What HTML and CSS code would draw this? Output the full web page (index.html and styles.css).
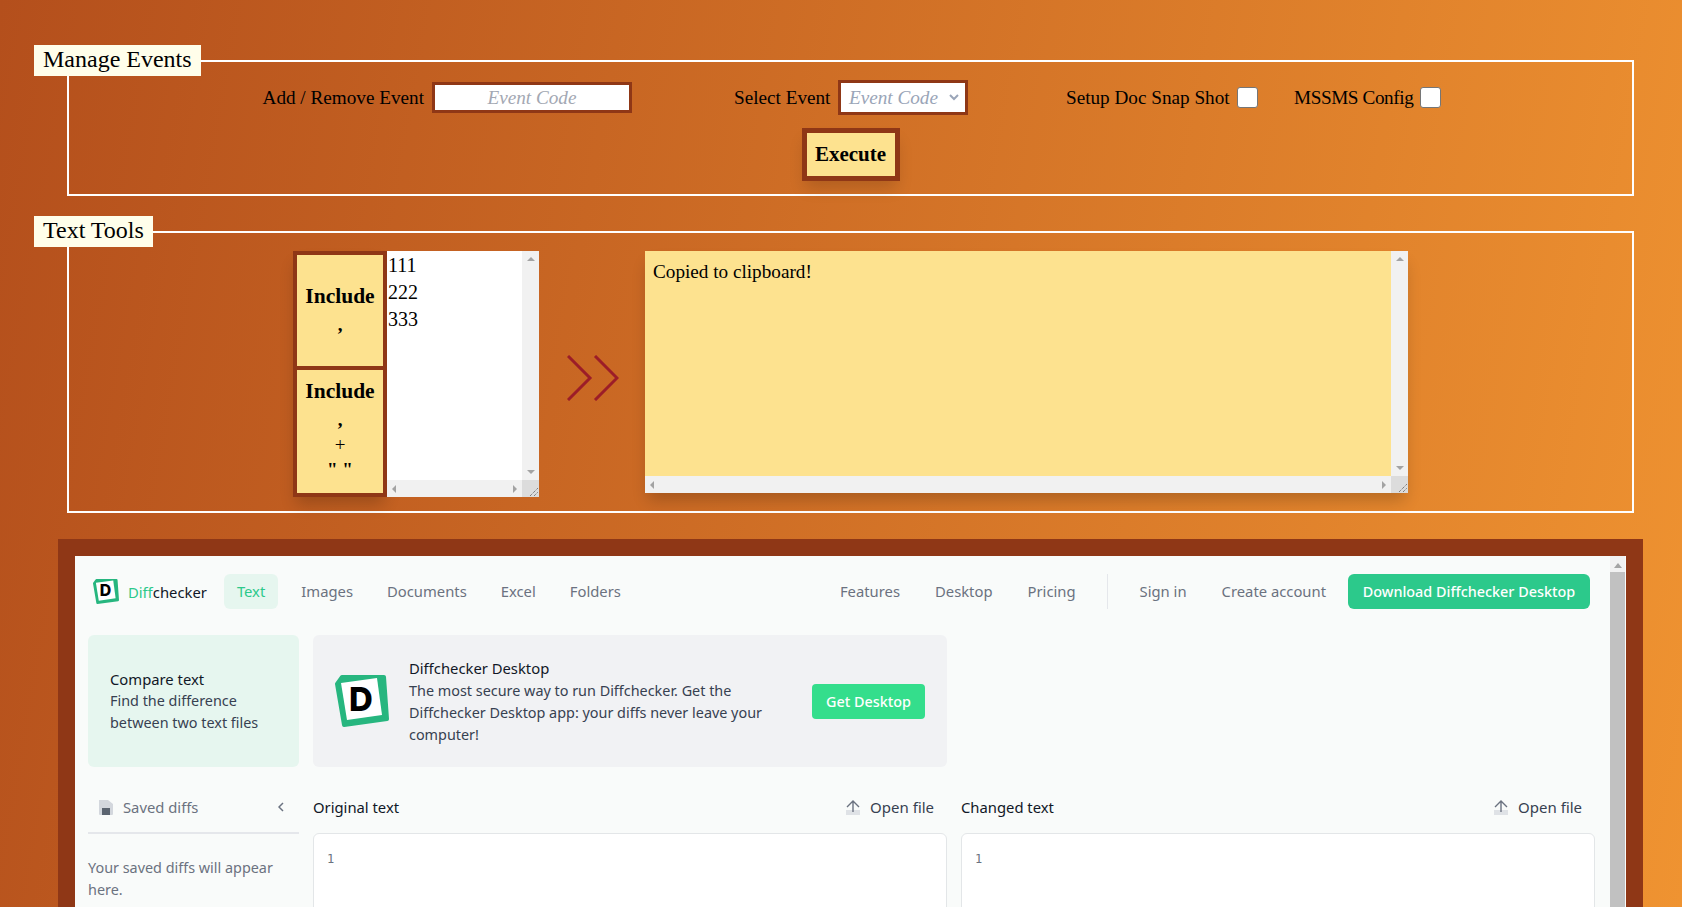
FILE: index.html
```html
<!DOCTYPE html>
<html lang="en">
<head>
  <meta charset="UTF-8"/>
  <title>Manage Events</title>
  <link rel="stylesheet" href="styles.css">
</head>
<body>

  <fieldset class="panel manage-panel">
    <legend>Manage Events</legend>
    <div class="event-row">
      <label class="lbl lbl-add">Add / Remove Event</label>
      <input type="text" class="event-input" placeholder="Event Code"/>
      <label class="lbl lbl-select">Select Event</label>
      <div class="event-select">
        <span>Event Code</span>
        <svg width="10" height="7" viewBox="0 0 10 7"><path d="M1 1l4 4 4-4" fill="none" stroke="#9aa5b8" stroke-width="2"/></svg>
      </div>
      <label class="lbl lbl-snap">Setup Doc Snap Shot</label>
      <input type="checkbox" class="check"/>
      <label class="lbl lbl-mssms">MSSMS Config</label>
      <input type="checkbox" class="check"/>
    </div>
    <div class="execute-row">
      <button class="execute">Execute</button>
    </div>
  </fieldset>

  <fieldset class="panel tools-panel">
    <legend>Text Tools</legend>
    <div class="tools-row">
      <div class="btn-stack">
        <button class="inc inc-a"><b>Include</b><span class="mark">,</span></button>
        <button class="inc inc-b"><b>Include</b><span class="mark">,</span><span>+</span><span class="mark">" "</span></button>
      </div>

      <div class="scrollbox small-box">
        <div class="box-text small-text">111<br>222<br>333</div>
        <div class="vbar"><i class="up"></i><i class="down"></i></div>
        <div class="hbar"><i class="left"></i><i class="right"></i></div>
        <div class="corner">
          <svg width="17" height="17" viewBox="0 0 17 17"><path d="M8 16l8-8M12 16l4-4" stroke="#555" stroke-width="1" stroke-dasharray="1 1" fill="none"/></svg>
        </div>
      </div>

      <svg class="arrows" width="52" height="46" viewBox="0 0 52 46">
        <path d="M1 1l22 22L1 45M28 1l22 22-22 22" fill="none" stroke="#9c1d28" stroke-width="3"/>
      </svg>

      <div class="scrollbox big-box">
        <div class="box-text big-text">Copied to clipboard!</div>
        <div class="vbar"><i class="up"></i><i class="down"></i></div>
        <div class="hbar"><i class="left"></i><i class="right"></i></div>
        <div class="corner">
          <svg width="17" height="17" viewBox="0 0 17 17"><path d="M8 16l8-8M12 16l4-4" stroke="#555" stroke-width="1" stroke-dasharray="1 1" fill="none"/></svg>
        </div>
      </div>
    </div>
  </fieldset>

  <div class="frame">
    <div class="dc">
      <div class="dc-page">
        <nav class="dc-nav">
          <a class="dc-logo">
            <svg width="26" height="26" viewBox="0 0 54 54">
              <polygon points="2,9 7,2 49,2 52,44 9,50" fill="#27b67f" stroke="#27b67f" stroke-width="4" stroke-linejoin="round"/>
              <polygon points="6,8 42,3 47,40 12,45" fill="#fff"/>
              <text x="26" y="36" class="logo-d" text-anchor="middle">D</text>
            </svg>
            <span><em>Diff</em>checker</span>
          </a>
          <a class="tab tab-on">Text</a>
          <a class="tab">Images</a>
          <a class="tab">Documents</a>
          <a class="tab">Excel</a>
          <a class="tab">Folders</a>
          <div class="nav-right">
            <a class="tab">Features</a>
            <a class="tab">Desktop</a>
            <a class="tab">Pricing</a>
            <span class="nav-sep"></span>
            <a class="tab">Sign in</a>
            <a class="tab">Create account</a>
            <a class="download">Download Diffchecker Desktop</a>
          </div>
        </nav>

        <div class="cards">
          <div class="card-compare">
            <strong>Compare text</strong>
            <p>Find the difference<br>between two text files</p>
          </div>
          <div class="card-desktop">
            <svg class="desktop-logo" width="54" height="54" viewBox="0 0 54 54">
              <polygon points="2,9 7,2 49,2 52,44 9,50" fill="#27b67f" stroke="#27b67f" stroke-width="4" stroke-linejoin="round"/>
              <polygon points="6,8 42,3 47,40 12,45" fill="#fff"/>
              <text x="26" y="36" class="logo-d" text-anchor="middle">D</text>
            </svg>
            <div class="desktop-copy">
              <strong>Diffchecker Desktop</strong>
              <p>The most secure way to run Diffchecker. Get the Diffchecker Desktop app: your diffs never leave your computer!</p>
            </div>
            <a class="get-desktop">Get Desktop</a>
          </div>
        </div>

        <div class="workspace">
          <aside class="saved">
            <div class="saved-head">
              <svg width="16" height="16" viewBox="0 0 16 16">
                <path d="M1 1h9l5 4v10a1 1 0 0 1-1 1H2a1 1 0 0 1-1-1z" fill="#d3d7dd"/>
                <rect x="4" y="9" width="8" height="7" fill="#5b6470"/>
              </svg>
              <span>Saved diffs</span>
              <svg class="saved-chev" width="6" height="10" viewBox="0 0 6 10"><path d="M5 1L1 5l4 4" fill="none" stroke="#6b7280" stroke-width="1.5"/></svg>
            </div>
            <p>Your saved diffs will appear here.</p>
          </aside>
          <section class="pane">
            <div class="pane-head">
              <span>Original text</span>
              <a class="open-file">
                <svg width="16" height="16" viewBox="0 0 16 16"><rect x="1" y="11" width="14" height="5" fill="#dfe2e6"/><path d="M8 13V2M2 8l6-6 6 6" fill="none" stroke="#6b7280" stroke-width="1.4"/></svg>
                Open file
              </a>
            </div>
            <div class="editor"><code>1</code></div>
          </section>
          <section class="pane">
            <div class="pane-head">
              <span>Changed text</span>
              <a class="open-file">
                <svg width="16" height="16" viewBox="0 0 16 16"><rect x="1" y="11" width="14" height="5" fill="#dfe2e6"/><path d="M8 13V2M2 8l6-6 6 6" fill="none" stroke="#6b7280" stroke-width="1.4"/></svg>
                Open file
              </a>
            </div>
            <div class="editor"><code>1</code></div>
          </section>
        </div>
      </div>
      <div class="dc-scroll"><i></i><b></b></div>
    </div>
  </div>

</body>
</html>
```

FILE: styles.css
```css
html, body {
  height: 907px;
  overflow: hidden;
}
body {
  margin: 0;
  padding: 45px 0 0;
  box-sizing: border-box;
  background: linear-gradient(100deg, #b44f1c 0%, #ef9331 100%);
  font-family: "Liberation Serif", serif;
  color: #000;
}

/* panels */
.panel {
  margin: 0 48px 0 67px;
  padding: 0;
  border: 2px solid #fff;
  min-width: 0;
}
.panel legend {
  margin: 0 0 3px -35px;
  padding: 0 9px;
  height: 31px;
  line-height: 29px;
  box-sizing: border-box;
  background: #fffeea;
  font-size: 24px;
}
.tools-panel {
  margin-top: 20px;
}

/* manage events */
.event-row {
  display: flex;
  align-items: center;
  height: 35px;
  margin-top: 1px;
}
.lbl {
  font-size: 19.2px;
  text-align: right;
  white-space: nowrap;
}
.lbl-add { width: 162px; margin-left: 193px; }
.lbl-select { width: 96px; margin-left: 102px; }
.lbl-snap { width: 163px; margin-left: 98px; }
.lbl-mssms { width: 118px; margin-left: 36px; letter-spacing: -0.4px; }
.event-input {
  width: 200px;
  height: 31px;
  margin: 0 0 0 8px;
  padding: 0;
  box-sizing: border-box;
  border: 3px solid #8f3716;
  background: #fff;
  text-align: center;
  font: italic 19.2px "Liberation Serif", serif;
}
.event-input::placeholder {
  color: #a3a8b3;
  opacity: 1;
}
.event-select {
  display: flex;
  align-items: center;
  justify-content: space-between;
  width: 130px;
  height: 35px;
  margin-left: 8px;
  padding: 0 6px 0 8px;
  box-sizing: border-box;
  border: 3px solid #8f3716;
  background: #fff;
  color: #9aa5b8;
  font: italic 19.2px "Liberation Serif", serif;
}
.check {
  appearance: none;
  width: 21px;
  height: 21px;
  margin: 0 0 0 8px;
  box-sizing: border-box;
  border: 1px solid #767676;
  border-radius: 3px;
  background: #fff;
}
.execute-row {
  display: flex;
  justify-content: center;
  margin-top: 13px;
  padding-bottom: 13px;
}
.execute {
  width: 98px;
  height: 53px;
  padding: 0;
  border: 5px solid #8f3716;
  background: #fde28f;
  box-shadow: 0 10px 15px -3px rgba(0,0,0,0.15);
  font: bold 21px "Liberation Serif", serif;
}

/* text tools */
.tools-row {
  display: flex;
  justify-content: center;
  align-items: flex-start;
  margin-top: 1px;
  padding-bottom: 14px;
}
.btn-stack {
  display: flex;
  flex-direction: column;
  gap: 4px;
  width: 94px;
  height: 246px;
  box-sizing: border-box;
  border: 4px solid #8f3716;
  background: #8f3716;
  box-shadow: 0 10px 15px -3px rgba(0,0,0,0.2);
}
.inc {
  display: flex;
  flex-direction: column;
  align-items: center;
  justify-content: center;
  padding: 0 0 5px;
  border: 0;
  background: #fde28f;
  font: 19px/22px "Liberation Serif", serif;
}
.inc b {
  font-size: 21.5px;
  line-height: 30px;
}
.inc .mark {
  font-weight: bold;
}
.inc-a { height: 111px; }
.inc-a b { margin-bottom: 3px; }
.inc-b { height: 123px; }
.inc-b b { margin-bottom: 1px; }
.inc-b span { line-height: 25px; }

.scrollbox {
  display: grid;
  grid-template-columns: 1fr 17px;
  grid-template-rows: 1fr 17px;
}
.small-box {
  width: 152px;
  height: 246px;
}
.big-box {
  width: 763px;
  height: 242px;
  box-shadow: 0 10px 15px -3px rgba(0,0,0,0.2);
}
.box-text {
  overflow: hidden;
}
.small-text {
  background: #fff;
  padding: 1px 0 0 1px;
  font-size: 20px;
  line-height: 27px;
}
.big-text {
  background: #fde28f;
  padding: 9px 8px 8px;
  font-size: 19.2px;
  line-height: 24px;
}
.arrows {
  margin: 104px 26px 0 28px;
}
.vbar, .hbar {
  display: flex;
  justify-content: space-between;
  align-items: center;
  background: #f1f1f1;
}
.vbar {
  flex-direction: column;
  padding: 6px 0;
}
.hbar {
  padding: 0 5px;
}
.corner {
  background: #dcdcdc;
  line-height: 0;
}
.vbar i, .hbar i {
  width: 0;
  height: 0;
  border-style: solid;
  border-color: transparent;
}
.up { border-width: 0 4px 4px; border-bottom-color: #a3a3a3 !important; }
.down { border-width: 4px 4px 0; border-top-color: #a3a3a3 !important; }
.left { border-width: 4px 4px 4px 0; border-right-color: #a3a3a3 !important; }
.right { border-width: 4px 0 4px 4px; border-left-color: #a3a3a3 !important; }

/* embedded diffchecker */
.frame {
  width: 1585px;
  height: 400px;
  margin: 26px 0 0 58px;
  box-sizing: border-box;
  border: 17px solid #8f3716;
  border-bottom: 0;
}
.dc {
  display: flex;
  height: 100%;
  background: #f9fbfa;
  font-family: "Noto Sans", sans-serif;
  font-size: 14.4px;
  line-height: 22px;
  color: #111827;
}
.dc-page {
  flex: 1;
  min-width: 0;
  padding: 18px 16px 0 13px;
  box-sizing: border-box;
}
.dc-scroll {
  display: flex;
  flex-direction: column;
  align-items: center;
  width: 15px;
  margin-right: 1px;
  background: #f1f1f1;
}
.dc-scroll i {
  width: 0;
  height: 0;
  margin: 7px 0 4px;
  border-style: solid;
  border-width: 0 4px 5px;
  border-color: transparent transparent #a3a3a3;
}
.dc-scroll b {
  flex: 1;
  align-self: stretch;
  background: #c1c1c1;
}

.dc-nav {
  display: flex;
  align-items: center;
  height: 35px;
  padding-right: 4px;
  font-size: 14.8px;
}
.dc-logo {
  display: flex;
  align-items: center;
  gap: 9px;
  margin: 0 17px 0 5px;
}
.dc-logo em {
  font-style: normal;
  color: #2cc98b;
}
.logo-d {
  font: 800 33px "Inter", sans-serif;
  fill: #000;
}
.tab {
  display: block;
  padding: 0 10px;
  margin-right: 14px;
  height: 35px;
  line-height: 35px;
  border-radius: 6px;
  color: #6b7280;
}
.tab-on {
  padding: 0 13px;
  margin-right: 13px;
  background: #e6f6ef;
  color: #2cc98b;
}
.nav-right {
  display: flex;
  align-items: center;
  margin-left: auto;
}
.nav-right .tab {
  padding: 0;
  margin-right: 35px;
}
.nav-right .tab:nth-last-child(2) {
  margin-right: 22px;
}
.nav-sep {
  width: 1px;
  height: 35px;
  margin: 0 32px 0 -4px;
  background: #e5e7eb;
}
.download {
  display: block;
  width: 242px;
  height: 35px;
  line-height: 35px;
  text-align: center;
  border-radius: 6px;
  background: #2cc98b;
  color: #fff;
  font-size: 14.4px;
  font-weight: 500;
}

.cards {
  display: flex;
  gap: 14px;
  margin-top: 26px;
}
.card-compare {
  display: flex;
  flex-direction: column;
  justify-content: center;
  width: 211px;
  height: 132px;
  padding-left: 22px;
  box-sizing: border-box;
  border-radius: 6px;
  background: #e6f6ef;
}
.card-compare strong, .desktop-copy strong {
  font-size: 14.8px;
  font-weight: 400;
}
.card-compare p, .desktop-copy p {
  margin: 0;
  color: #374151;
}
.card-desktop {
  display: flex;
  align-items: center;
  width: 634px;
  height: 132px;
  box-sizing: border-box;
  padding: 0 22px;
  border-radius: 6px;
  background: #f1f2f4;
}
.desktop-logo {
  margin: 2px 20px 0 0;
  flex: none;
}
.desktop-copy {
  width: 360px;
}
.get-desktop {
  width: 113px;
  height: 35px;
  margin-left: auto;
  line-height: 35px;
  text-align: center;
  border-radius: 4px;
  background: #34de8c;
  color: #fff;
  font-weight: 500;
}

.workspace {
  display: flex;
  margin-top: 19px;
}
.saved {
  width: 211px;
  margin-right: 14px;
  flex: none;
}
.saved-head {
  display: flex;
  align-items: center;
  height: 48px;
  padding: 0 15px 4px 10px;
  box-sizing: border-box;
  border-bottom: 2px solid #e5e7eb;
  color: #6b7280;
  font-size: 14.8px;
}
.saved-head span {
  margin-left: 9px;
}
.saved-chev {
  margin-left: auto;
}
.saved p {
  margin: 23px 0 0;
  color: #6b7280;
}
.pane {
  width: 634px;
  flex: none;
  margin-right: 14px;
}
.pane-head {
  display: flex;
  align-items: center;
  justify-content: space-between;
  height: 47px;
  padding-bottom: 6px;
  box-sizing: border-box;
  font-size: 14.8px;
}
.open-file {
  display: flex;
  align-items: center;
  gap: 9px;
  padding-right: 13px;
  color: #374151;
  font-size: 15px;
}
.editor {
  height: 100px;
  padding: 13px;
  box-sizing: border-box;
  border: 1px solid #e3e6e8;
  border-radius: 6px;
  background: #fff;
}
.editor code {
  font: 12px "DejaVu Sans Mono", monospace;
  color: #6b7280;
}
```
